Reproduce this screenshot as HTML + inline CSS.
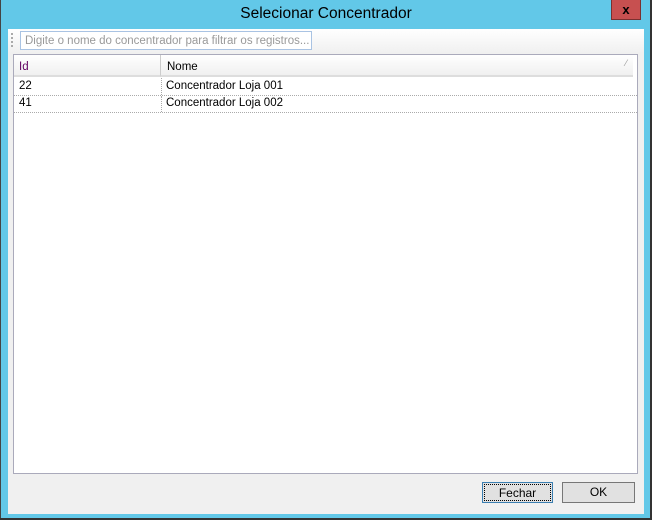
<html><body style="margin:0;width:652px;height:520px;background:#62c8e8;position:relative;font-family:'Liberation Sans',sans-serif;overflow:hidden">
<div style="position:absolute;left:0;top:0;width:1px;height:520px;background:#444"></div>
<div style="position:absolute;right:0;top:0;width:2px;height:520px;background:#333"></div>
<div style="position:absolute;left:0;bottom:0;width:652px;height:2px;background:#333"></div>
<div style="position:absolute;left:0;top:5px;width:652px;text-align:center;font-size:15.5px;color:#000">Selecionar Concentrador</div>
<div style="position:absolute;left:611px;top:0;width:30px;height:20px;background:#c75050;border:1px solid #7a3030;border-top:none;box-sizing:border-box;text-align:center;font-weight:bold;font-size:13px;line-height:19px">x</div>
<div style="position:absolute;left:8px;top:29px;width:636px;height:485px;background:#f0f0f0"></div>
<div style="position:absolute;left:8px;top:29px;width:636px;height:24px;background:linear-gradient(#fff,#f0f0f0)"></div>
<div style="position:absolute;left:11px;top:33px;width:2px;height:14px;border-left:2px dotted #aaa"></div>
<div style="position:absolute;left:20px;top:31px;width:292px;height:19px;border:1px solid #a9c3e3;background:#fff;box-sizing:border-box;font-size:11.5px;color:#999;padding:3px 0 0 4px">Digite o nome do concentrador para filtrar os registros...</div>
<div style="position:absolute;left:13px;top:54px;width:625px;height:420px;background:#fff;border:1px solid #aab;box-sizing:border-box"></div>
<div style="position:absolute;left:14px;top:55px;width:147px;height:22px;background:linear-gradient(#fff,#f0f0f0);border-right:1px solid #ccc;border-bottom:2px solid #ddd;box-sizing:border-box;font-size:11.5px;color:#600060;padding:6px 0 0 5px">Id</div>
<div style="position:absolute;left:161px;top:55px;width:472px;height:22px;background:linear-gradient(#fff,#f0f0f0);border-bottom:2px solid #ddd;box-sizing:border-box;font-size:11.5px;color:#000;padding:6px 0 0 6px">Nome<span style="position:absolute;right:6px;top:3px;color:#999;font-size:9px">⁄</span></div>
<div style="position:absolute;left:14px;top:78px;width:623px;height:17px;border-bottom:1px dotted #aaa;font-size:11.5px;line-height:17px"><span style="position:absolute;left:5px">22</span><span style="position:absolute;left:147px;border-left:1px dotted #aaa;height:17px;padding-left:4px">Concentrador Loja 001</span></div>
<div style="position:absolute;left:14px;top:96px;width:623px;height:16px;border-bottom:1px dotted #aaa;font-size:11.5px;line-height:15px"><span style="position:absolute;left:5px">41</span><span style="position:absolute;left:147px;border-left:1px dotted #aaa;height:16px;padding-left:4px">Concentrador Loja 002</span></div>
<div style="position:absolute;left:482px;top:482px;width:71px;height:21px;border:1px solid #3c7fb1;background:#e1e1e1;box-sizing:border-box;font-size:12px;text-align:center;line-height:17px"><div style="border:1px dotted #000;margin:1px;height:15px">Fechar</div></div>
<div style="position:absolute;left:562px;top:482px;width:73px;height:21px;border:1px solid #777;background:#e1e1e1;box-sizing:border-box;font-size:12px;text-align:center;line-height:19px">OK</div>
</body></html>
